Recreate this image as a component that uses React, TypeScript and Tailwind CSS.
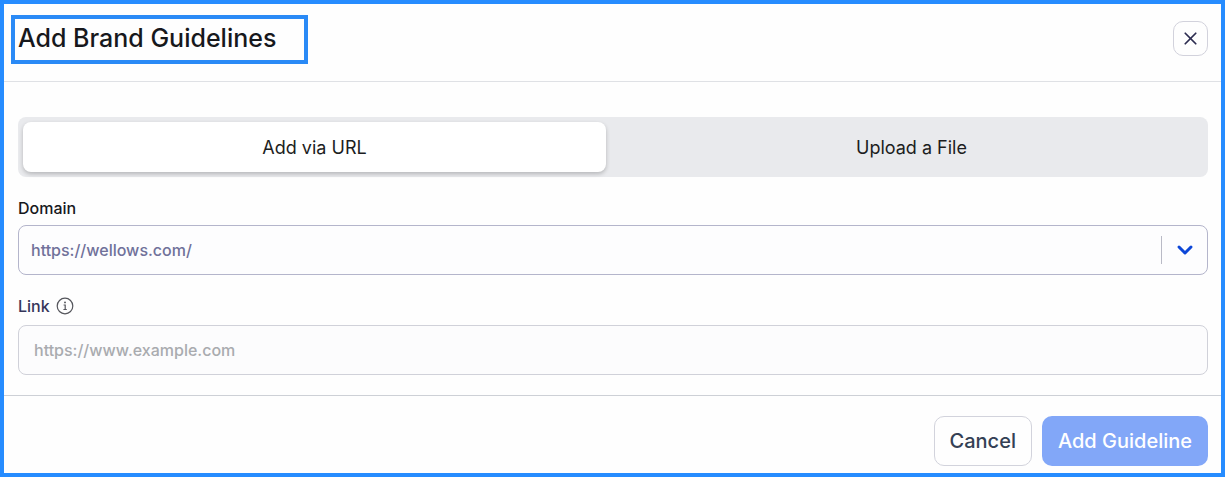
import { useState } from "react";
import { ChevronDown, X } from "lucide-react";
import clsx from "clsx";

const tabs = [
  { id: "url", label: "Add via URL" },
  { id: "file", label: "Upload a File" },
];

function InfoIcon({ className }: { className?: string }) {
  return (
    <svg viewBox="0 0 18 18" fill="none" aria-hidden="true" className={className}>
      <circle cx="9" cy="9" r="7.8" stroke="currentColor" strokeWidth="1.2" />
      <path d="M7.6 8h1.6v4.4M7.4 12.5h3.4" stroke="currentColor" strokeWidth="1.2" />
      <circle cx="9" cy="5.4" r="0.95" fill="currentColor" />
    </svg>
  );
}

export default function App() {
  const [activeTab, setActiveTab] = useState("url");

  return (
    <main className="min-h-screen border-4 border-[#268cff] bg-[#fefefe] font-['Inter',sans-serif]">
      {/* Header */}
      <header className="flex items-start justify-between border-b border-[#dfe1e5] pt-[11px] pr-[13px] pb-[17px] pl-[7px]">
        <h1 className="flex h-[49px] w-[297px] items-center border-4 border-[#2a8af6] px-[3px] pb-1 text-[25px] leading-8 font-medium whitespace-nowrap text-[#17181c]">
          Add Brand Guidelines
        </h1>
        <button
          type="button"
          aria-label="Close"
          className="mt-1.5 flex size-[35px] items-center justify-center rounded-[10px] border border-[#d2d2dc] text-[#2c2c50]"
        >
          <X size={21} strokeWidth={2} />
        </button>
      </header>

      {/* Form */}
      <form className="px-[13px] pt-[35px] pb-5 pl-3.5">
        <div role="tablist" className="grid grid-cols-2 gap-3.5 rounded-lg bg-[#e9eaed] p-[5px]">
          {tabs.map((tab) => (
            <button
              key={tab.id}
              type="button"
              role="tab"
              aria-selected={activeTab === tab.id}
              onClick={() => setActiveTab(tab.id)}
              className={clsx(
                "h-[50px] rounded-lg pt-0.5 text-lg text-[#1c1d21]",
                activeTab === tab.id && "bg-white shadow-[0_2px_4px_rgba(0,0,0,0.22)]"
              )}
            >
              {tab.label}
            </button>
          ))}
        </div>

        <div className="mt-[19px] flex flex-col gap-[5px]">
          <label htmlFor="domain" className="text-base leading-6 font-medium text-[#17181c]">
            Domain
          </label>
          <div className="relative">
            <select
              id="domain"
              className="h-[50px] w-full appearance-none rounded-lg border border-[#b4b5cb] bg-[#fdfdfe] pr-16 pl-3 text-base font-medium text-[#70719a]"
            >
              <option>https://wellows.com/</option>
            </select>
            <div className="pointer-events-none absolute inset-y-0 right-0 flex w-[47px] items-center">
              <span className="h-7 w-px bg-[#b9bac6]" />
              <ChevronDown size={24} strokeWidth={3} className="mx-auto text-[#0c46d8]" />
            </div>
          </div>
        </div>

        <div className="mt-[19px] flex flex-col gap-[7px]">
          <div className="flex items-center gap-1.5">
            <label htmlFor="link" className="text-base leading-6 font-medium text-[#35355a]">
              Link
            </label>
            <InfoIcon className="size-[18px] text-[#55565c]" />
          </div>
          <input
            id="link"
            type="url"
            placeholder="https://www.example.com"
            className="h-[50px] w-full rounded-lg border border-[#d0d1d9] bg-[#fcfcfd] px-[15px] text-base font-medium placeholder:text-[#a9abaf]"
          />
        </div>
      </form>

      {/* Actions */}
      <footer className="flex justify-end gap-2.5 border-t border-[#cdd0d6] px-[13px] pt-5 pb-[7px]">
        <button
          type="button"
          className="h-[50px] rounded-[10px] border border-[#d2d3dc] px-[15px] text-xl font-medium text-[#344054]"
        >
          Cancel
        </button>
        <button
          type="button"
          className="h-[50px] rounded-[10px] bg-[#82a7f8] px-4 text-xl font-medium text-white"
        >
          Add Guideline
        </button>
      </footer>
    </main>
  );
}
